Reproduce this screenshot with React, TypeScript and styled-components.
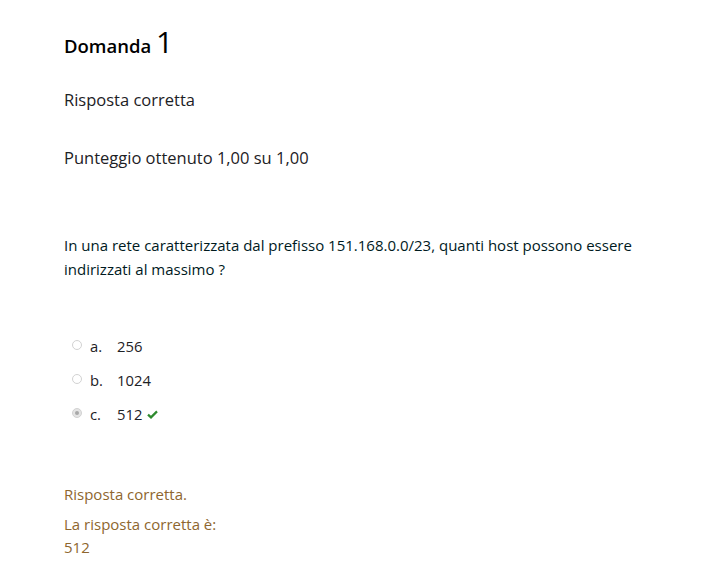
import React from "react";
import styled, { createGlobalStyle } from "styled-components";

const GlobalStyle = createGlobalStyle`
  body {
    margin: 0;
    background: #fff;
    font-family: "Open Sans", "Noto Sans", sans-serif;
    color: #1d2125;
  }
`;

const Page = styled.div`
  padding: 24px 0 0 64px;
  width: 600px;
`;

const Title = styled.h3`
  margin: 0;
  font-size: 18.5px;
  font-weight: 600;
  color: #000;
  line-height: 36px;
  span {
    font-size: 30px;
    font-weight: 400;
  }
`;

const State = styled.div`
  margin-top: 25px;
  font-size: 16.5px;
  line-height: 22px;
  color: #1d2125;
`;

const Grade = styled(State)`
  margin-top: 36px;
`;

const QText = styled.p`
  margin: 64px 0 0;
  font-size: 15px;
  line-height: 24px;
  color: #001a1e;
`;

const Answers = styled.div`
  margin-top: 53px;
  padding-left: 8px;
  display: flex;
  flex-direction: column;
  gap: 10px;
`;

const Option = styled.div`
  display: flex;
  align-items: center;
  height: 24px;
  font-size: 14.8px;
  color: #1d2125;
`;

const Radio = styled.span<{ $checked?: boolean }>`
  width: 10px;
  height: 10px;
  border-radius: 50%;
  border: 1.5px solid #d2d2d2;
  background: ${p => (p.$checked ? "#e4e4e4" : "#fff")};
  box-sizing: border-box;
  display: flex;
  align-items: center;
  justify-content: center;
  margin: -3px 8px 0 0;
  &::after {
    content: "";
    display: ${p => (p.$checked ? "block" : "none")};
    width: 4px;
    height: 4px;
    border-radius: 50%;
    background: #a8a8a8;
  }
`;

const Letter = styled.span`
  width: 27px;
`;

const Feedback = styled.div`
  margin-top: 57px;
  font-size: 15px;
  color: #8e662e;
  line-height: 23px;
`;

const RightAnswer = styled.div`
  margin-top: 7px;
`;

const Check = () => (
  <svg width="11" height="9" viewBox="0 0 11 9" style={{ marginLeft: 5 }}>
    <path d="M1 4.6 L4 7.4 L10 1.4" fill="none" stroke="#2d8a2d" strokeWidth="2.2" />
  </svg>
);

const options = [
  { l: "a.", v: "256" },
  { l: "b.", v: "1024" },
  { l: "c.", v: "512", checked: true },
];

export default function App() {
  return (
    <Page>
      <GlobalStyle />
      <Title>
        Domanda <span>1</span>
      </Title>
      <State>Risposta corretta</State>
      <Grade>Punteggio ottenuto 1,00 su 1,00</Grade>
      <QText>
        In una rete caratterizzata dal prefisso 151.168.0.0/23, quanti host possono essere indirizzati al massimo ?
      </QText>
      <Answers>
        {options.map(o => (
          <Option key={o.l}>
            <Radio $checked={o.checked} />
            <Letter>{o.l}</Letter>
            {o.v}
            {o.checked && <Check />}
          </Option>
        ))}
      </Answers>
      <Feedback>
        <div>Risposta corretta.</div>
        <RightAnswer>
          La risposta corretta è:
          <br />
          512
        </RightAnswer>
      </Feedback>
    </Page>
  );
}
